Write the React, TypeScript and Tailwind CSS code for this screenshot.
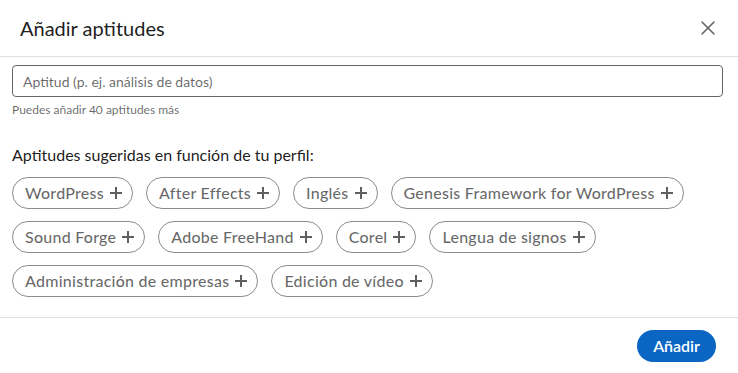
import { X } from "lucide-react";

const SUGGESTED = [
  "WordPress",
  "After Effects",
  "Inglés",
  "Genesis Framework for WordPress",
  "Sound Forge",
  "Adobe FreeHand",
  "Corel",
  "Lengua de signos",
  "Administración de empresas",
  "Edición de vídeo",
];

const font = { fontFamily: '"Segoe UI", Lato, "Noto Sans", sans-serif' };

function PlusIcon() {
  return (
    <svg width="14" height="14" viewBox="0 0 14 14" className="ml-[5px] shrink-0">
      <path d="M7 1v12M1 7h12" stroke="#5f5f5f" strokeWidth="2" fill="none" />
    </svg>
  );
}

export default function App() {
  return (
    <div className="w-[738px] h-[373px] bg-white text-[#000000e6] overflow-hidden" style={font}>
      <div className="h-[57px] flex items-center justify-between pl-5 pr-[18px] border-b border-[#e0e0e0]">
        <h2 className="text-[20px] leading-6 text-[#000000e6] font-normal">Añadir aptitudes</h2>
        <button className="w-6 h-6 flex items-center justify-center text-[#666666]">
          <X size={24} strokeWidth={1.6} />
        </button>
      </div>

      <div className="pl-3 pr-[15px] pt-2">
        <input
          className="w-full h-8 px-[10px] border border-[#666666] rounded-[4px] text-[14px] outline-none placeholder:text-[#00000099]"
          placeholder="Aptitud (p. ej. análisis de datos)"
          style={font}
        />
        <p className="mt-[5px] text-[12px] leading-4 text-[#00000099]">Puedes añadir 40 aptitudes más</p>

        <p className="mt-[27px] text-[16px] leading-5 text-[#000000e6]">Aptitudes sugeridas en función de tu perfil:</p>

        <div className="mt-[12px] flex flex-wrap gap-x-[13px] gap-y-3">
          {SUGGESTED.map(skill => (
            <button
              key={skill}
              className="h-8 flex items-center pl-3 pr-[9px] rounded-full border border-[#8c8c8c] text-[16px] tracking-[0.25px] text-[#00000099] font-medium"
            >
              <span>{skill}</span>
              <PlusIcon />
            </button>
          ))}
        </div>
      </div>

      <div className="mt-[20px] border-t border-[#e0e0e0] flex justify-end pt-3 pr-[22px]">
        <button className="h-8 px-4 rounded-full bg-[#0a66c2] text-white text-[16px] font-semibold">
          Añadir
        </button>
      </div>
    </div>
  );
}
